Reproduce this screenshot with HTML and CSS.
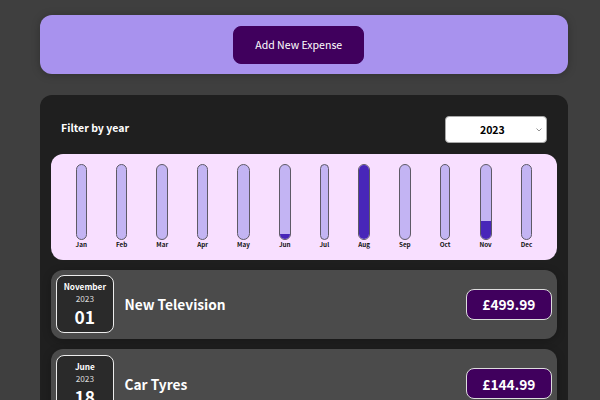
FILE: index.html
```html
<!DOCTYPE html>
<html lang="en">
<head>
<meta charset="utf-8">
<title>Expenses</title>
<link rel="stylesheet" href="styles.css">
</head>
<body>
<div class="new-expense">
  <button class="add-btn">Add New Expense</button>
</div>
<div class="expenses">
  <div class="expenses-filter">
    <div class="expenses-filter__control">
      <label>Filter by year</label>
      <div class="select-wrap">
        <select class="year-select">
          <option>2023</option>
          <option>2022</option>
          <option>2021</option>
        </select>
        <svg class="chev" width="6" height="4" viewBox="0 0 6 4"><path d="M0.5 0.5 L3 3 L5.5 0.5" fill="none" stroke="#777" stroke-width="0.8"/></svg>
      </div>
    </div>
  </div>
  <div class="chart">
    <div class="chart-bar"><div class="chart-bar__inner"><div class="chart-bar__fill" style="height:0%"></div></div><div class="chart-bar__label">Jan</div></div>
    <div class="chart-bar"><div class="chart-bar__inner"><div class="chart-bar__fill" style="height:0%"></div></div><div class="chart-bar__label">Feb</div></div>
    <div class="chart-bar"><div class="chart-bar__inner"><div class="chart-bar__fill" style="height:0%"></div></div><div class="chart-bar__label">Mar</div></div>
    <div class="chart-bar"><div class="chart-bar__inner"><div class="chart-bar__fill" style="height:0%"></div></div><div class="chart-bar__label">Apr</div></div>
    <div class="chart-bar"><div class="chart-bar__inner"><div class="chart-bar__fill" style="height:0%"></div></div><div class="chart-bar__label">May</div></div>
    <div class="chart-bar"><div class="chart-bar__inner"><div class="chart-bar__fill" style="height:7.25%"></div></div><div class="chart-bar__label">Jun</div></div>
    <div class="chart-bar"><div class="chart-bar__inner"><div class="chart-bar__fill" style="height:0%"></div></div><div class="chart-bar__label">Jul</div></div>
    <div class="chart-bar"><div class="chart-bar__inner"><div class="chart-bar__fill" style="height:100%"></div></div><div class="chart-bar__label">Aug</div></div>
    <div class="chart-bar"><div class="chart-bar__inner"><div class="chart-bar__fill" style="height:0%"></div></div><div class="chart-bar__label">Sep</div></div>
    <div class="chart-bar"><div class="chart-bar__inner"><div class="chart-bar__fill" style="height:0%"></div></div><div class="chart-bar__label">Oct</div></div>
    <div class="chart-bar"><div class="chart-bar__inner"><div class="chart-bar__fill" style="height:25%"></div></div><div class="chart-bar__label">Nov</div></div>
    <div class="chart-bar"><div class="chart-bar__inner"><div class="chart-bar__fill" style="height:0%"></div></div><div class="chart-bar__label">Dec</div></div>
  </div>
  <ul class="expenses-list">
    <li class="expense-item">
      <div class="expense-date">
        <div class="expense-date__month">November</div>
        <div class="expense-date__year">2023</div>
        <div class="expense-date__day">01</div>
      </div>
      <div class="expense-item__description">
        <h2>New Television</h2>
        <div class="expense-item__price">£499.99</div>
      </div>
    </li>
    <li class="expense-item">
      <div class="expense-date">
        <div class="expense-date__month">June</div>
        <div class="expense-date__year">2023</div>
        <div class="expense-date__day">18</div>
      </div>
      <div class="expense-item__description">
        <h2>Car Tyres</h2>
        <div class="expense-item__price">£144.99</div>
      </div>
    </li>
  </ul>
</div>
</body>
</html>
```
FILE: styles.css
```css
html {
  font-size: 10.56px;
  font-family: "Noto Sans CJK JP", "Noto Sans", sans-serif;
}
body {
  margin: 0;
  background-color: #3f3f3f;
}
.new-expense {
  background-color: #a892ee;
  padding: 1rem;
  margin: 15px 0 0 40px;
  width: 50rem;
  box-sizing: border-box;
  border-radius: 12px;
  text-align: center;
  box-shadow: 0 1px 8px rgba(0, 0, 0, 0.25);
}
.add-btn {
  font: inherit;
  font-size: 1rem;
  cursor: pointer;
  padding: 1rem 2rem;
  border: 1px solid #40005d;
  background-color: #40005d;
  color: white;
  border-radius: 8px;
  margin-right: 1rem;
}
.expenses {
  padding: 1rem;
  background-color: #1f1f1f;
  margin: 2rem 0 2rem 40px;
  width: 50rem;
  box-sizing: border-box;
  border-radius: 12px;
}
.expenses-filter {
  color: white;
  padding: 0 1rem;
}
.expenses-filter__control {
  display: flex;
  align-items: center;
  justify-content: space-between;
  margin: 1rem 0;
}
.expenses-filter label {
  font-weight: bold;
  font-size: 1rem;
  margin-bottom: 0.5rem;
}
.select-wrap {
  position: relative;
  display: flex;
}
.year-select {
  appearance: none;
  -webkit-appearance: none;
  font: inherit;
  font-size: 1rem;
  font-weight: bold;
  width: 102px;
  height: 27px;
  padding: 0 0 0 34px;
  border: 1px solid #a8a8a8;
  border-radius: 4px;
  background: #fff;
  color: #000;
}
.chev {
  position: absolute;
  right: 5px;
  top: 12px;
}
.chart {
  padding: 1rem;
  border-radius: 12px;
  background-color: #f8dfff;
  display: flex;
  justify-content: space-around;
  box-sizing: border-box;
  height: 105.6px;
}
.chart-bar {
  height: 100%;
  display: flex;
  flex-direction: column;
  align-items: center;
}
.chart-bar__inner {
  flex: 1;
  width: 100%;
  box-sizing: border-box;
  border: 1px solid #5e5a66;
  border-radius: 12px;
  background-color: #c3b4f3;
  overflow: hidden;
  display: flex;
  flex-direction: column;
  justify-content: flex-end;
}
.chart-bar__fill {
  background-color: #4826b9;
  width: 100%;
}
.chart-bar__label {
  font-weight: bold;
  font-size: 6.3px;
  text-align: center;
  line-height: 8px;
  color: #111;
  padding-top: 1px;
}
.expenses-list {
  list-style: none;
  padding: 0;
  margin: 0;
}
.expense-item {
  display: flex;
  align-items: center;
  box-shadow: 0 2px 8px rgba(0, 0, 0, 0.25);
  padding: 0.5rem;
  margin: 1rem 0;
  border-radius: 12px;
  background-color: #4b4b4b;
}
.expense-date {
  display: flex;
  flex-direction: column;
  width: 5.5rem;
  height: 5.5rem;
  box-sizing: border-box;
  border: 1px solid #ececec;
  background-color: #2a2a2a;
  color: white;
  border-radius: 8px;
  align-items: center;
  justify-content: center;
}
.expense-date__month {
  font-size: 0.78rem;
  font-weight: bold;
  line-height: 11px;
}
.expense-date__year {
  font-size: 0.78rem;
  line-height: 11px;
  margin-top: 1px;
  color: #ddd;
}
.expense-date__day {
  font-size: 1.65rem;
  font-weight: bold;
  line-height: 20px;
  margin-top: 3px;
}
.expense-item__description {
  display: flex;
  align-items: center;
  flex: 1;
}
.expense-item__description h2 {
  font-size: 1.3rem;
  flex: 1;
  margin: 0 1rem;
  color: white;
}
.expense-item__price {
  font-size: 1.3rem;
  font-weight: bold;
  color: white;
  background-color: #40005d;
  border: 1px solid #ddd;
  padding: 0.45rem 1.5rem;
  border-radius: 8px;
}
```
